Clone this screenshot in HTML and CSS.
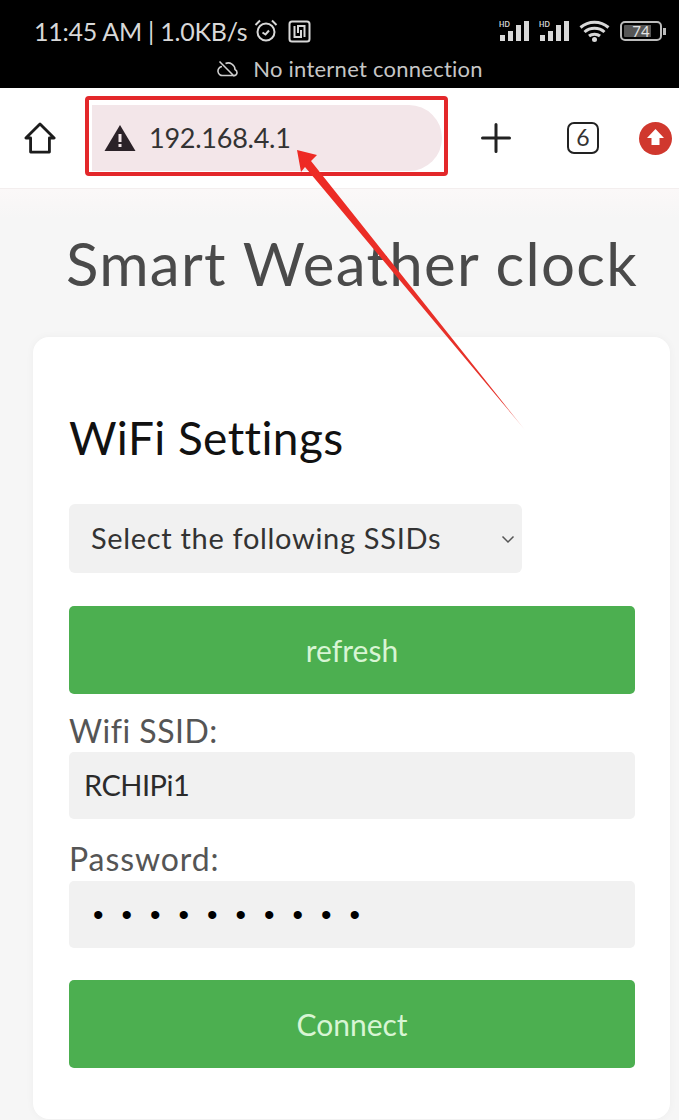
FILE: index.html
```html
<!DOCTYPE html>
<html lang="en">
<head>
    <meta charset="UTF-8">
    <meta name="viewport" content="width=device-width, initial-scale=1.0">
    <title>Smart Weather clock</title>
    <link rel="stylesheet" href="styles.css">
</head>
<body>

<!-- Phone status bar -->
<header class="status">
    <div class="status__row">
        <span class="status__time">11:45 AM | 1.0KB/s</span>
        <svg class="status__alarm" width="24" height="24" viewBox="0 0 24 24" fill="none" stroke="#d8d8d8" stroke-width="2">
            <circle cx="12" cy="13" r="8.5"/>
            <path d="M1.5 6 6 1.5M22.5 6 18 1.5M8.5 13.5l3 2 3.5-4"/>
        </svg>
        <svg class="status__nfc" width="23" height="23" viewBox="0 0 23 23" fill="none" stroke="#d8d8d8" stroke-width="2">
            <rect x="1.5" y="1.5" width="20" height="20" rx="2.5"/>
            <path d="M6.500 6v11h6.500V10M16.500 17V6H10v7"/>
        </svg>
        <span class="status__spacer"></span>
        <svg class="status__signal" width="33" height="22" viewBox="0 0 33 22" fill="#d8d8d8">
            <rect x="1" y="15" width="5" height="6"/><rect x="9" y="11" width="5" height="10"/><rect x="17" y="5" width="5" height="16"/><rect x="25" y="1" width="5" height="20"/>
            <text x="0" y="7" class="status__hd">HD</text>
        </svg>
        <svg class="status__signal" width="33" height="22" viewBox="0 0 33 22" fill="#d8d8d8">
            <rect x="1" y="15" width="5" height="6"/><rect x="9" y="11" width="5" height="10"/><rect x="17" y="5" width="5" height="16"/><rect x="25" y="1" width="5" height="20"/>
            <text x="0" y="7" class="status__hd">HD</text>
        </svg>
        <svg class="status__wifi" width="31" height="22" viewBox="0 0 31 22" fill="none" stroke="#d8d8d8" stroke-width="3">
            <path d="M1.500 7.500c8-7 20-7 28 0M5.500 12c5.500-5 14.500-5 20 0M10 16c3-2.500 8-2.500 11 0"/>
            <circle cx="15.500" cy="19.500" r="2.500" fill="#d8d8d8" stroke="none"/>
        </svg>
        <div class="status__battery"><span class="status__level">74</span></div>
        <span class="status__cap"></span>
    </div>
    <div class="status__notice">
        <svg width="22" height="18" viewBox="0 0 22 18" fill="none" stroke="#cfcfcf" stroke-width="1.600">
            <path d="M5 6.500a4.500 4.500 0 0 0 1 9h11c3.500 0 4-4.500 1-6C18 5 13 1.500 8.500 3.500M2.500 1.500l15 15"/>
        </svg>
        <span>No internet connection</span>
    </div>
</header>

<!-- Browser toolbar -->
<nav class="toolbar">
    <svg class="toolbar__home" width="32" height="34" viewBox="0 0 34 36" fill="none" stroke="#1c1c1c" stroke-width="3" stroke-linejoin="round">
        <path d="M2 18 17 3l15 15h-5v15H7V18z"/>
    </svg>
    <div class="address">
        <svg width="32" height="28" viewBox="0 0 32 28">
            <path d="M16 1 31.500 27H.5z" fill="#2b2228"/>
            <rect x="14.500" y="10" width="3" height="8" fill="#f3e6e9"/>
            <rect x="14.500" y="20" width="3" height="3" fill="#f3e6e9"/>
        </svg>
        <span class="address__url">192.168.4.1</span>
    </div>
    <svg class="toolbar__plus" width="30" height="30" viewBox="0 0 30 30" stroke="#222" stroke-width="3" stroke-linecap="round">
        <path d="M15 1.500v27M1.500 15h27"/>
    </svg>
    <div class="toolbar__tabs">6</div>
    <svg class="toolbar__update" width="33" height="33" viewBox="0 0 33 33">
        <circle cx="16.500" cy="16.500" r="16.500" fill="#d0382e"/>
        <path d="M16.500 7 25 16h-4.500v7h-8v-7H8z" fill="#fff"/>
    </svg>
</nav>

<main class="page">
    <h1 class="page__title">Smart Weather clock</h1>

    <section class="card">
        <h2 class="card__title">WiFi Settings</h2>
        <div class="picker">
            <select class="picker__select">
                <option>Select the following SSIDs</option>
            </select>
            <svg class="picker__arrow" width="14" height="9" viewBox="0 0 14 9" fill="none" stroke="#555" stroke-width="1.500">
                <path d="M1.500 1.500 7 7l5.500-5.500"/>
            </svg>
        </div>
        <button class="btn btn--refresh" type="button">refresh</button>
        <label class="field__label" for="ssid">Wifi SSID:</label>
        <input class="field__input" id="ssid" type="text" value="RCHIPi1">
        <label class="field__label field__label--second" for="pass">Password:</label>
        <input class="field__input field__input--pass" id="pass" type="password" value="1234567890">
        <button class="btn btn--connect" type="button">Connect</button>
    </section>
</main>

<!-- Red annotation drawn over the screenshot -->
<div class="mark"></div>
<svg class="arrow" width="679" height="1120" viewBox="0 0 679 1120">
    <defs>
        <linearGradient id="tail" x1="298" y1="152" x2="525" y2="430" gradientUnits="userSpaceOnUse">
            <stop offset="0" stop-color="#ee2a24"/>
            <stop offset="0.9" stop-color="#e5332b"/>
            <stop offset="1" stop-color="#e5332b" stop-opacity="0.2"/>
        </linearGradient>
    </defs>
    <path d="M297 150 317 155 311 161 525 430 305 167 301 172z" fill="url(#tail)"/>
</svg>

</body>
</html>
```

FILE: styles.css
```css
/* General styles */
* {
    box-sizing: border-box;
}
html, body {
    height: 1120px;
    overflow: hidden;
}
body {
    position: relative;
    margin: 0;
    font-family: 'Lato', 'Noto Sans', sans-serif;
    background: #f6f6f6;
}

/* Status bar */
.status {
    height: 88px;
    padding: 16px 13px 0 34px;
    background: #000;
    color: #d8d8d8;
}
.status__row {
    display: flex;
    align-items: center;
    height: 30px;
}
.status__time {
    font-size: 25px;
    letter-spacing: -0.25px;
    white-space: nowrap;
}
.status__alarm {
    margin-left: 7px;
}
.status__nfc {
    margin-left: 10px;
}
.status__spacer {
    flex: 1;
}
.status__signal {
    margin-right: 7px;
}
.status__hd {
    font-size: 7px;
    font-weight: bold;
}
.status__battery {
    width: 42px;
    height: 20px;
    margin-left: 10px;
    padding: 2px;
    border: 2px solid #bcbcbc;
    border-radius: 5px;
}
.status__level {
    display: block;
    height: 12px;
    background: linear-gradient(90deg, #555 80%, transparent 80%);
    border-radius: 1px;
    color: #e2e2e2;
    font-size: 15px;
    line-height: 12px;
    text-align: center;
}
.status__cap {
    width: 3px;
    height: 7px;
    margin-left: 1px;
    background: #bcbcbc;
}
.status__notice {
    display: flex;
    align-items: center;
    justify-content: center;
    gap: 14px;
    margin: 9px 0 0 -34px;
    padding-left: 34px;
    color: #c6c6c6;
    font-size: 22px;
    letter-spacing: 0.25px;
}

/* Browser toolbar */
.toolbar {
    display: flex;
    align-items: center;
    height: 101px;
    padding-left: 24px;
    background: #fff;
    border-bottom: 1px solid #f3eeee;
}
.address {
    display: flex;
    align-items: center;
    gap: 13px;
    width: 350px;
    height: 66px;
    margin-left: 36px;
    padding-left: 12px;
    background: #f3e6e9;
    border-radius: 0 33px 33px 0;
}
.address__url {
    padding-bottom: 2px;
    color: #333;
    font-size: 27px;
    letter-spacing: -0.25px;
}
.toolbar__plus {
    margin-left: 39px;
}
.toolbar__tabs {
    width: 32px;
    height: 32px;
    margin-left: 56px;
    border: 2.500px solid #222;
    border-radius: 7px;
    color: #333;
    font-size: 23px;
    line-height: 26px;
    text-align: center;
}
.toolbar__update {
    margin-left: 40px;
}

/* Page */
.page {
    height: 931px;
    padding: 39px 9px 0 33px;
    background: linear-gradient(#fbf8f8, #f6f6f6 30px);
}
.page__title {
    margin: 0 0 39px;
    padding-left: 33px;
    color: #4a4a4a;
    font-size: 60px;
    font-weight: 400;
    letter-spacing: 1.3px;
    line-height: 70px;
    white-space: nowrap;
}
.card {
    height: 782px;
    padding: 72px 35px 0 36px;
    background: #fff;
    border-radius: 16px;
    box-shadow: 0 0 8px rgba(0, 0, 0, 0.04);
}
.card__title {
    margin: 0 0 37px;
    color: #111;
    font-size: 46px;
    font-weight: 400;
    letter-spacing: 0.4px;
    line-height: 58px;
}

/* Form */
.picker {
    position: relative;
    width: 453px;
    margin-bottom: 33px;
}
.picker__select {
    display: block;
    width: 100%;
    height: 69px;
    padding: 0 22px 2px;
    appearance: none;
    background: #f1f1f1;
    border: none;
    border-radius: 6px;
    color: #333;
    font-family: inherit;
    font-size: 29px;
    letter-spacing: 0.68px;
}
.picker__arrow {
    position: absolute;
    top: 31px;
    right: 7px;
}
.btn {
    display: block;
    width: 100%;
    height: 88px;
    background: #4caf50;
    border: none;
    border-radius: 5px;
    color: #d8f5d4;
    font-family: inherit;
    font-size: 30px;
}
.field__label {
    display: block;
    height: 58px;
    padding-top: 17px;
    color: #555;
    font-size: 32px;
    letter-spacing: 0.5px;
    line-height: 40px;
}
.field__label--second {
    height: 62px;
    padding-top: 20px;
    letter-spacing: 0.9px;
}
.field__input {
    display: block;
    width: 100%;
    height: 67px;
    padding: 0 15px 2px;
    background: #f1f1f1;
    border: none;
    border-radius: 5px;
    color: #2b2b2b;
    font-family: inherit;
    font-size: 29px;
    letter-spacing: -0.5px;
}
.field__input--pass {
    padding: 0 0 0 24px;
    letter-spacing: 18px;
    font-family: 'Liberation Sans', sans-serif;
    font-size: 30px;
    color: #000;
}
.btn--connect {
    margin-top: 32px;
}

/* Annotation */
.mark {
    position: absolute;
    top: 96px;
    left: 85px;
    width: 363px;
    height: 80px;
    border: 4px solid #e3272a;
    border-radius: 4px;
}
.arrow {
    position: absolute;
    top: 0;
    left: 0;
}
```
